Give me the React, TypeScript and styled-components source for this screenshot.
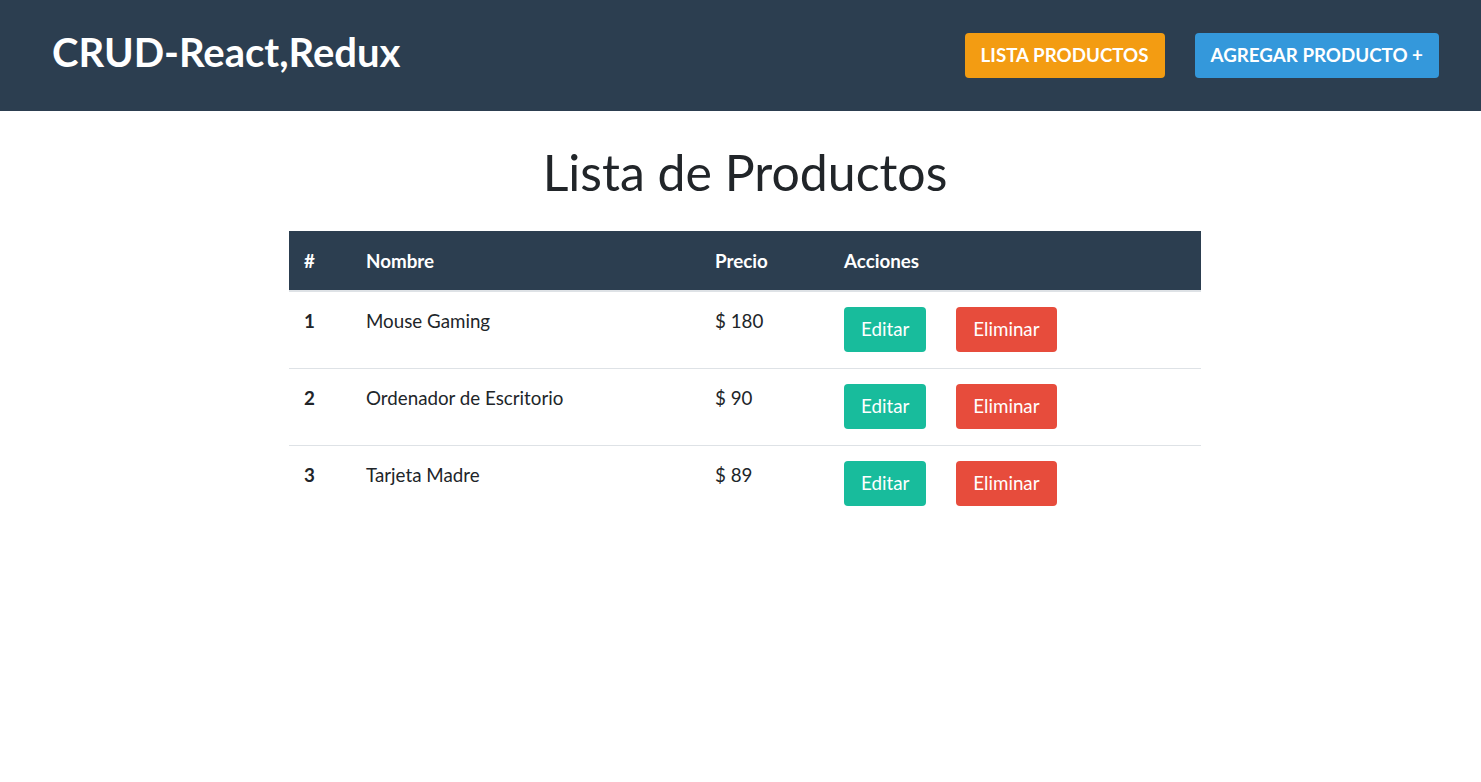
import styled, { createGlobalStyle } from "styled-components";

const GlobalStyle = createGlobalStyle`
  * { box-sizing: border-box; }
  body {
    margin: 0;
    font-family: Lato, "Open Sans", sans-serif;
    color: #212529;
    background: #fff;
  }
`;

const Navbar = styled.nav`
  height: 111px;
  background-color: #2c3e50;
  display: flex;
  align-items: center;
  justify-content: space-between;
  padding: 0 42px 0 52px;
`;

const Brand = styled.h1`
  margin: 0 0 8px;
  font-size: 40px;
  font-weight: 700;
  color: #fff;
  line-height: 1.2;
`;

const NavActions = styled.div`
  display: flex;
  gap: 30px;
`;

const Button = styled.button<{ $color: string; $upper?: boolean }>`
  border: none;
  border-radius: 4px;
  background-color: ${(p) => p.$color};
  color: #fff;
  font-family: Lato, sans-serif;
  font-size: 18.75px;
  font-weight: ${(p) => (p.$upper ? 700 : 400)};
  text-transform: ${(p) => (p.$upper ? "uppercase" : "none")};
  line-height: 1.5;
  height: 45px;
  padding: 0 16px;
  cursor: pointer;
`;

const ActionButton = styled(Button)`
  padding: 0 17px;
`;

const Main = styled.main`
  width: 912px;
  margin: 0 0 0 289px;
`;

const Title = styled.h2`
  margin: 30px 0 27px;
  text-align: center;
  font-size: 50px;
  font-weight: 400;
  line-height: 1.25;
`;

const Table = styled.table`
  width: 100%;
  border-collapse: collapse;
  font-size: 18.75px;
  line-height: 1.5;
`;

const HeadCell = styled.th`
  background-color: #2c3e50;
  color: #fff;
  text-align: left;
  font-weight: 700;
  padding: 16px 15px 15px;
  border-bottom: 2px solid #dee2e6;
`;

const Row = styled.tr`
  & + & td {
    border-top: 1px solid #dee2e6;
  }
`;

const Cell = styled.td<{ $bold?: boolean }>`
  padding: 15px 15px 16px;
  vertical-align: top;
  font-weight: ${(p) => (p.$bold ? 700 : 400)};
`;

const Actions = styled.div`
  display: flex;
  gap: 30px;
`;

const productos = [
  { id: 1, nombre: "Mouse Gaming", precio: 180 },
  { id: 2, nombre: "Ordenador de Escritorio", precio: 90 },
  { id: 3, nombre: "Tarjeta Madre", precio: 89 },
];

export default function App() {
  return (
    <>
      <GlobalStyle />
      <Navbar>
        <Brand>CRUD-React,Redux</Brand>
        <NavActions>
          <Button $color="#f39c12" $upper>
            Lista Productos
          </Button>
          <Button $color="#3498db" $upper>
            Agregar Producto +
          </Button>
        </NavActions>
      </Navbar>
      <Main>
        <Title>Lista de Productos</Title>
        <Table>
          <colgroup>
            <col style={{ width: 62 }} />
            <col style={{ width: 349 }} />
            <col style={{ width: 129 }} />
            <col />
          </colgroup>
          <thead>
            <tr>
              <HeadCell>#</HeadCell>
              <HeadCell>Nombre</HeadCell>
              <HeadCell>Precio</HeadCell>
              <HeadCell>Acciones</HeadCell>
            </tr>
          </thead>
          <tbody>
            {productos.map((p) => (
              <Row key={p.id}>
                <Cell $bold>{p.id}</Cell>
                <Cell>{p.nombre}</Cell>
                <Cell>$ {p.precio}</Cell>
                <Cell>
                  <Actions>
                    <ActionButton $color="#18bc9c">Editar</ActionButton>
                    <ActionButton $color="#e74c3c">Eliminar</ActionButton>
                  </Actions>
                </Cell>
              </Row>
            ))}
          </tbody>
        </Table>
      </Main>
    </>
  );
}
